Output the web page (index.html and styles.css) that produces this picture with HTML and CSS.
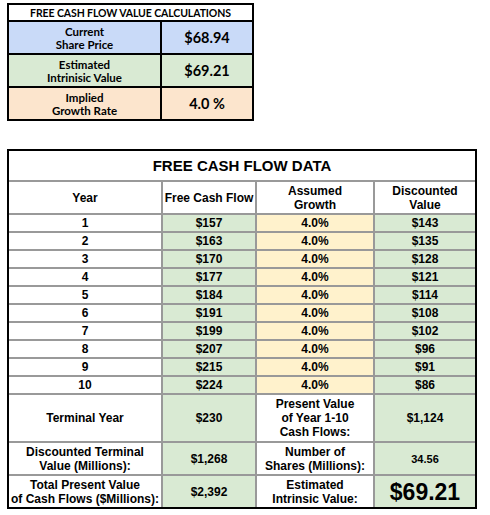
FILE: index.html
```html
<!DOCTYPE html>
<html>
<head>
<meta charset="utf-8">
<link rel="stylesheet" href="styles.css">
</head>
<body>
<div class="summary">
  <div class="s-title">FREE CASH FLOW VALUE CALCULATIONS</div>
  <div class="s-label blue">Current<br>Share Price</div>
  <div class="s-value blue">$68.94</div>
  <div class="s-label green">Estimated<br>Intrinisic Value</div>
  <div class="s-value green">$69.21</div>
  <div class="s-label peach">Implied<br>Growth Rate</div>
  <div class="s-value peach">4.0 %</div>
</div>

<div class="data">
  <div class="d-title">FREE CASH FLOW DATA</div>
  <div class="c">Year</div>
  <div class="c">Free Cash Flow</div>
  <div class="c">Assumed<br>Growth</div>
  <div class="c">Discounted<br>Value</div>

  <div class="c">1</div><div class="c g">$157</div><div class="c y">4.0%</div><div class="c g">$143</div>
  <div class="c">2</div><div class="c g">$163</div><div class="c y">4.0%</div><div class="c g">$135</div>
  <div class="c">3</div><div class="c g">$170</div><div class="c y">4.0%</div><div class="c g">$128</div>
  <div class="c">4</div><div class="c g">$177</div><div class="c y">4.0%</div><div class="c g">$121</div>
  <div class="c">5</div><div class="c g">$184</div><div class="c y">4.0%</div><div class="c g">$114</div>
  <div class="c">6</div><div class="c g">$191</div><div class="c y">4.0%</div><div class="c g">$108</div>
  <div class="c">7</div><div class="c g">$199</div><div class="c y">4.0%</div><div class="c g">$102</div>
  <div class="c">8</div><div class="c g">$207</div><div class="c y">4.0%</div><div class="c g">$96</div>
  <div class="c">9</div><div class="c g">$215</div><div class="c y">4.0%</div><div class="c g">$91</div>
  <div class="c">10</div><div class="c g">$224</div><div class="c y">4.0%</div><div class="c g">$86</div>

  <div class="c">Terminal Year</div>
  <div class="c g">$230</div>
  <div class="c">Present Value<br>of Year 1-10<br>Cash Flows:</div>
  <div class="c g">$1,124</div>

  <div class="c">Discounted Terminal<br>Value (Millions):</div>
  <div class="c g">$1,268</div>
  <div class="c">Number of<br>Shares (Millions):</div>
  <div class="c g light">34.56</div>

  <div class="c">Total Present Value<br>of Cash Flows ($Millions):</div>
  <div class="c g">$2,392</div>
  <div class="c">Estimated<br>Intrinsic Value:</div>
  <div class="c g big">$69.21</div>
</div>
</body>
</html>
```

FILE: styles.css
```css
html, body {
  margin: 0;
  padding: 0;
  background: #ffffff;
}

body {
  padding: 3px 0 0 7px;
  color: #000;
}

.summary {
  display: grid;
  grid-template-columns: 151px 90px;
  grid-template-rows: 15px 31px 31px 31px;
  gap: 2px;
  width: max-content;
  background: #000;
  border: 2px solid #000;
  font-family: Lato, "Open Sans", sans-serif;
  font-weight: 700;
}

.summary > div {
  display: flex;
  align-items: center;
  justify-content: center;
  text-align: center;
  background: #fff;
}

.s-title {
  grid-column: 1 / 3;
  font-size: 10.5px;
  letter-spacing: -0.1px;
}

.s-label {
  font-size: 11.5px;
  line-height: 13px;
}

.s-value {
  font-size: 14.5px;
}

.summary > .blue { background: #c9daf8; }
.summary > .green { background: #d9ead3; }
.summary > .peach { background: #fce5cd; }

.data {
  margin-top: 28px;
  display: grid;
  grid-template-columns: 152px 92px 116px 100px;
  grid-template-rows: 29px 31px repeat(10, 16px) 46px 31px 31px;
  gap: 2px;
  width: max-content;
  background: #999999;
  border: 2px solid #000;
  font-family: "Liberation Sans", Arial, sans-serif;
  font-weight: 700;
  font-size: 12px;
  line-height: 14px;
}

.data > div {
  display: flex;
  align-items: center;
  justify-content: center;
  text-align: center;
  background: #fff;
}

.d-title {
  grid-column: 1 / 5;
  font-size: 15px;
}

.data > .g { background: #d9ead3; }
.data > .y { background: #fff2cc; }

.data > .light {
  font-weight: 700;
  font-size: 11px;
}

.data > .big {
  font-size: 23px;
}
```
